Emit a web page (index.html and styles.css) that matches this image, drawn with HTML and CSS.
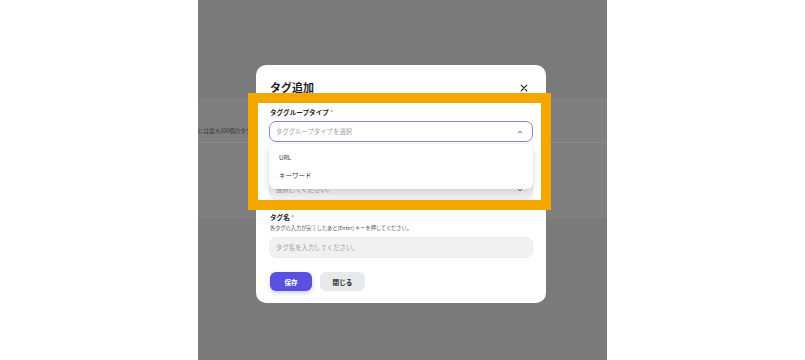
FILE: index.html
```html
<!DOCTYPE html>
<html lang="ja">
<head>
<meta charset="utf-8">
<link rel="stylesheet" href="styles.css">
</head>
<body>
<div class="stage">
  <div class="page">
    <div class="page-top"></div>
    <div class="page-card">
      <div class="card-head"></div>
      <div class="card-text">には最大100個のタグ</div>
    </div>
  </div>

  <div class="modal">
    <div class="modal-head">
      <h2 class="modal-title">タグ追加</h2>
      <svg class="close-icon" width="8" height="8" viewBox="0 0 10 10"><path d="M1.5 1.5L8.5 8.5M8.5 1.5L1.5 8.5" stroke="#222" stroke-width="1.5" stroke-linecap="round"/></svg>
    </div>

    <div class="field">
      <div class="label">タググループタイプ <span class="req">*</span></div>
      <div class="select select-open">
        <span class="ph">タググループタイプを選択</span>
        <svg width="6" height="4" viewBox="0 0 6 4"><path d="M1 3.2L3 1.2L5 3.2" fill="none" stroke="#555" stroke-width="0.9"/></svg>
      </div>
    </div>

    <div class="field">
      <div class="label covered">タググループ <span class="req">*</span></div>
      <div class="hint covered">タググループを選択してください。</div>
      <div class="select select-gray">
        <span class="ph">選択してください。</span>
        <svg width="6" height="4" viewBox="0 0 6 4"><path d="M1 1L3 3L5 1" fill="none" stroke="#555" stroke-width="0.9"/></svg>
      </div>
    </div>

    <div class="field">
      <div class="label">タグ名 <span class="req">*</span></div>
      <div class="hint">各タグの入力が完了したあと[Enter] キーを押してください。</div>
      <div class="select select-gray">
        <span class="ph">タグ名を入力してください。</span>
      </div>
    </div>

    <div class="actions">
      <button class="btn btn-primary">保存</button>
      <button class="btn btn-secondary">閉じる</button>
    </div>

    <div class="dropdown">
      <div class="option">URL</div>
      <div class="option">キーワード</div>
    </div>
  </div>

  <div class="highlight"></div>
</div>
</body>
</html>
```

FILE: styles.css
```css
* { box-sizing: border-box; }
html, body {
  margin: 0;
  padding: 0;
  background: #ffffff;
  font-family: "Noto Sans CJK JP", "Noto Sans", sans-serif;
}
.stage {
  position: relative;
  width: 805px;
  height: 360px;
  overflow: hidden;
}
.page {
  margin-left: 198px;
  width: 409px;
  height: 360px;
  background: #7a7a7a;
  overflow: hidden;
}
.page-top {
  height: 98px;
}
.page-card {
  height: 120px;
  background: #7f7f7f;
}
.card-head {
  height: 45px;
  border-bottom: 1px solid #8a8a8a;
}
.card-text {
  margin-top: -16px;
  font-size: 5.5px;
  line-height: 8px;
  color: #353535;
  white-space: nowrap;
}

.modal {
  position: absolute;
  left: 256px;
  top: 65px;
  width: 290px;
  height: 238px;
  background: #ffffff;
  border-radius: 10px;
  padding: 14px 13px 12px 13px;
}
.modal-head {
  display: flex;
  align-items: center;
  justify-content: space-between;
  height: 16px;
  margin-bottom: 12px;
}
.modal-title {
  margin: 0 0 0 1px;
  font-size: 11px;
  line-height: 16px;
  font-weight: 700;
  color: #1c1c1c;
}
.close-icon {
  margin-right: 5px;
  margin-top: 2px;
}
.field {
  margin-bottom: 12px;
}
.label {
  font-size: 6.6px;
  line-height: 10px;
  font-weight: 700;
  color: #222;
  margin-left: 1px;
  margin-bottom: 4px;
}
.covered {
  visibility: hidden;
}
.req {
  color: #e5567a;
  font-weight: 400;
}
.hint {
  font-size: 5.2px;
  line-height: 9px;
  color: #555;
  margin-left: 1px;
  margin-top: -3px;
  margin-bottom: 5px;
}
.select {
  height: 21px;
  border-radius: 7px;
  display: flex;
  align-items: center;
  justify-content: space-between;
  padding: 0 9px 0 6px;
}
.select-open {
  border: 1px solid #8985cf;
  background: #fff;
}
.select-gray {
  background: #f1f1f2;
  border: 1px solid #ececee;
}
.ph {
  font-size: 6.4px;
  color: #a0a0a4;
}
.actions {
  display: flex;
  gap: 8px;
  margin-top: 14px;
  padding-left: 1px;
}
.btn {
  height: 19px;
  border: none;
  border-radius: 6px;
  font-family: inherit;
  font-size: 6.6px;
  font-weight: 700;
  padding: 0;
}
.btn-primary {
  width: 42px;
  background: #5a50e0;
  color: #fff;
  box-shadow: 0 2px 4px rgba(70, 60, 200, 0.25);
}
.btn-secondary {
  width: 45px;
  background: #e8e9ec;
  color: #222;
}
.dropdown {
  position: absolute;
  left: 13px;
  top: 79px;
  width: 264px;
  height: 45px;
  background: #fff;
  border-radius: 6px;
  box-shadow: 0 3px 8px rgba(0, 0, 0, 0.14), 0 0 2px rgba(0, 0, 0, 0.08);
  padding-top: 9px;
}
.option {
  font-size: 6.5px;
  line-height: 9px;
  color: #333;
  padding-left: 10px;
  height: 18px;
}
.highlight {
  position: absolute;
  left: 248px;
  top: 93px;
  width: 303px;
  height: 117px;
  border: 10px solid #f5a700;
}
```
